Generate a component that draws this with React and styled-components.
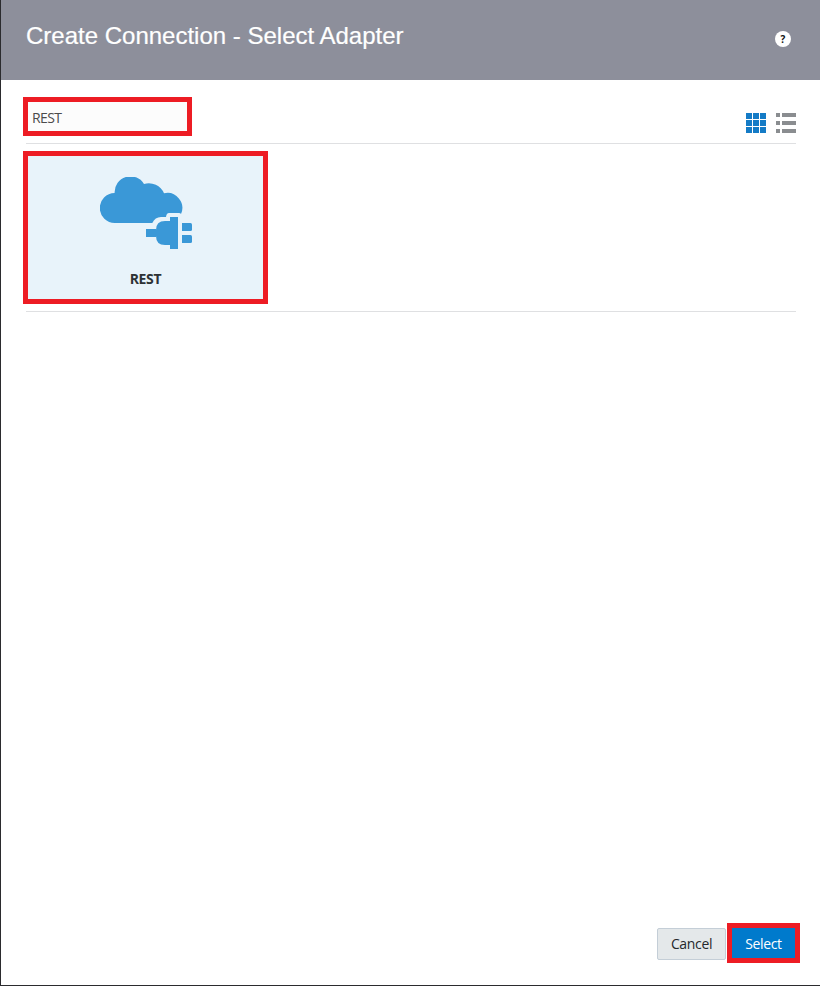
import React, { useState } from 'react';
import styled, { createGlobalStyle } from 'styled-components';

const GlobalStyle = createGlobalStyle`
  * { box-sizing: border-box; }
  body { margin: 0; background: #fff; }
`;

const Dialog = styled.div`
  display: flex;
  flex-direction: column;
  width: 820px;
  height: 986px;
  border-left: 1px solid #2b2b2e;
  border-bottom: 1px solid #2b2b2e;
  background: #fff;
  font-family: 'Open Sans', sans-serif;
`;

const Header = styled.header`
  display: flex;
  justify-content: space-between;
  height: 80px;
  padding: 20px 29px 0 25px;
  background: #8d8f9b;
`;

const Title = styled.h1`
  margin: 0;
  font: 400 24px/32px 'Liberation Sans', Arial, sans-serif;
  color: #fff;
  -webkit-text-stroke: 0.2px #fff;
`;

const HelpButton = styled.button`
  width: 16px;
  height: 16px;
  margin-top: 11px;
  padding: 0;
  border: 0;
  border-radius: 50%;
  background: #fff;
  color: #111;
  font: 700 10px/16px 'Open Sans', sans-serif;
  text-align: center;
`;

const Content = styled.main`
  flex: 1;
  padding: 17px 24px 0 25px;
`;

const Toolbar = styled.div`
  display: flex;
  justify-content: space-between;
  height: 47px;
  border-bottom: 1px solid #dfe0e2;
`;

const SearchInput = styled.input`
  width: 169px;
  height: 39px;
  margin-left: -3px;
  padding: 2px 4px 0;
  border: 5px solid #ed1c24;
  border-radius: 0;
  outline: none;
  background: #fcfcfc;
  color: #4b4b4b;
  font: 400 14px 'Open Sans', sans-serif;
  letter-spacing: -0.6px;
`;

const ViewSwitch = styled.div`
  display: flex;
  gap: 10px;
  padding-top: 16px;
`;

const ViewButton = styled.button`
  width: 20px;
  height: 20px;
  padding: 0;
  border: 0;
  background: none;
  color: ${(p) => (p.$active ? '#147bc6' : '#8a8d90')};

  svg { display: block; }
`;

const AdapterGrid = styled.div`
  display: flex;
  height: 168px;
  padding-top: 7px;
  border-bottom: 1px solid #dfe0e2;
`;

const AdapterCard = styled.div`
  display: flex;
  flex-direction: column;
  align-items: center;
  width: 245px;
  height: 153px;
  margin-left: -3px;
  padding-top: 21px;
  border: 5px solid #ed1c24;
  background: #e8f3fa;
`;

const AdapterName = styled.span`
  margin-top: 20px;
  color: #2d3235;
  font: 700 14px/20px 'Open Sans', sans-serif;
  letter-spacing: -0.3px;
`;

const Footer = styled.footer`
  display: flex;
  justify-content: flex-end;
  align-items: center;
  gap: 1px;
  height: 40px;
  margin: 0 20px 22px 0;
`;

const Button = styled.button`
  width: ${(p) => (p.$primary ? 73 : 69)}px;
  height: ${(p) => (p.$primary ? 40 : 32)}px;
  margin-top: ${(p) => (p.$primary ? 0 : 2)}px;
  padding: ${(p) => (p.$primary ? '1px 0 0' : '0')};
  border: ${(p) => (p.$primary ? '5px solid #ed1c24' : '1px solid #c4ced7')};
  border-radius: ${(p) => (p.$primary ? 0 : 2)}px;
  background: ${(p) => (p.$primary ? '#007acc' : '#e4e8ea')};
  color: ${(p) => (p.$primary ? '#fff' : '#24282c')};
  font: 400 14px/20px 'Open Sans', sans-serif;
  letter-spacing: -0.35px;
`;

const CELLS = [0, 7, 14];

const GridIcon = () => (
  <svg width="20" height="20" fill="currentColor" shapeRendering="crispEdges">
    {CELLS.flatMap((y) => CELLS.map((x) => <rect key={`${x}-${y}`} x={x} y={y} width="6" height="6" />))}
  </svg>
);

const ListIcon = () => (
  <svg width="20" height="20" fill="currentColor" shapeRendering="crispEdges">
    {[0, 8, 16].map((y) => (
      <g key={y}>
        <rect x="0" y={y} width="4" height="4" />
        <rect x="6" y={y} width="14" height="4" />
      </g>
    ))}
  </svg>
);

const CloudPlugIcon = () => (
  <svg width="92" height="72" fill="#3a98d7">
    <path d="M15 46A15 15 0 0 1 14.600 16A15.900 16 0 0 1 44 6.900A16.500 16.500 0 0 1 64 16.300A15 15 0 0 1 81 37Q80.500 36 79 36H69Q66.500 36 66 40H61Q55 40 52.300 46Z" />
    <path d="M46 52H56V60H46Z" />
    <path d="M70 44H65Q56 44 56 53V59Q56 68 65 68H70V72H78V40H70Z" />
    <path d="M82 46H90.500Q92 46 92 47.500V52.500Q92 54 90.500 54H82Z" />
    <path d="M82 58H90.500Q92 58 92 59.500V64.500Q92 66 90.500 66H82Z" />
  </svg>
);

export default function App() {
  const [query, setQuery] = useState('REST');
  return (
    <>
      <GlobalStyle />
      <Dialog>
        <Header>
          <Title>Create Connection - Select Adapter</Title>
          <HelpButton>?</HelpButton>
        </Header>
        <Content>
          <Toolbar>
            <SearchInput value={query} onChange={(e) => setQuery(e.target.value)} />
            <ViewSwitch>
              <ViewButton $active aria-label="Grid view"><GridIcon /></ViewButton>
              <ViewButton aria-label="List view"><ListIcon /></ViewButton>
            </ViewSwitch>
          </Toolbar>
          <AdapterGrid>
            <AdapterCard>
              <CloudPlugIcon />
              <AdapterName>REST</AdapterName>
            </AdapterCard>
          </AdapterGrid>
        </Content>
        <Footer>
          <Button>Cancel</Button>
          <Button $primary>Select</Button>
        </Footer>
      </Dialog>
    </>
  );
}
